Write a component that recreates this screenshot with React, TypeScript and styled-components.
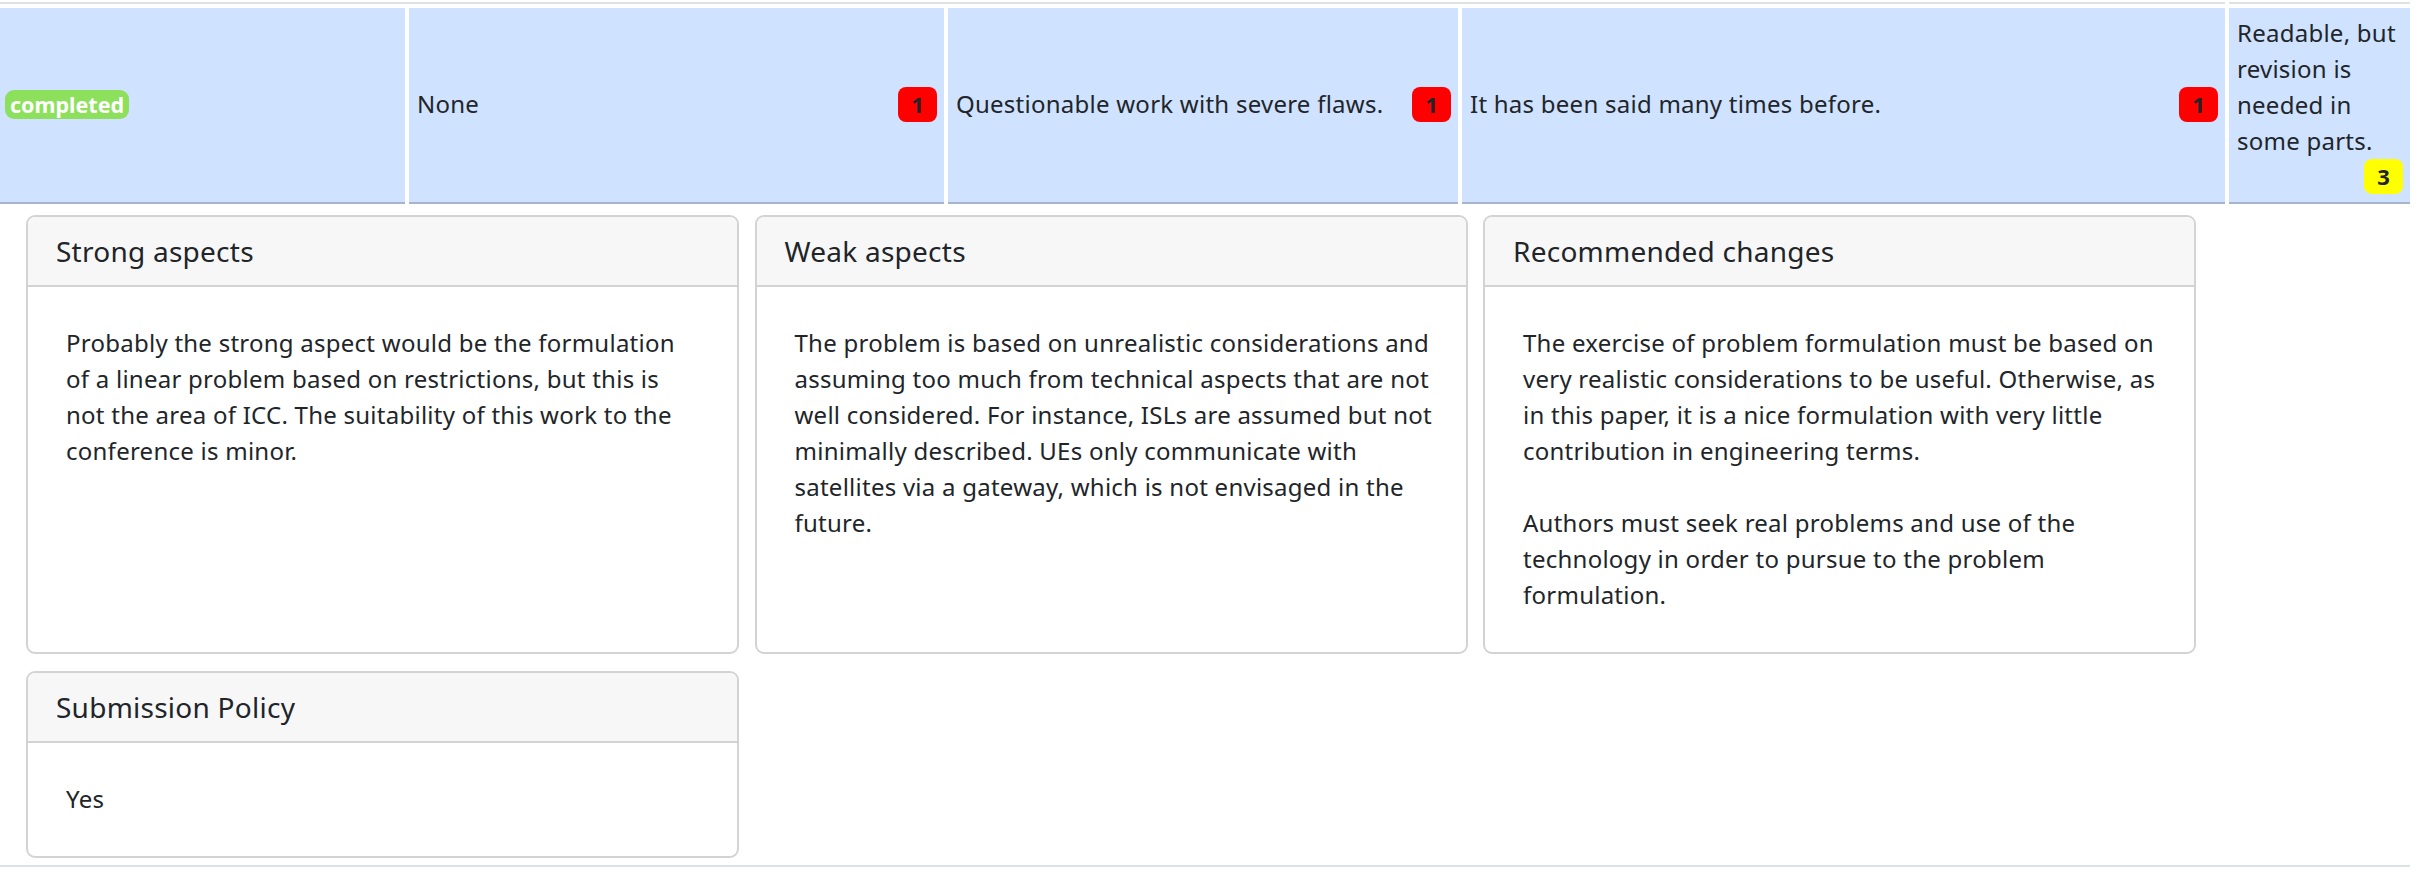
import React from "react";
import styled, { createGlobalStyle } from "styled-components";

const GlobalStyle = createGlobalStyle`
  html, body { margin: 0; padding: 0; background: #ffffff; }
  body {
    font-family: "Noto Sans", "Open Sans", sans-serif;
    font-size: 24px;
    line-height: 36px;
    letter-spacing: 0.25px;
    color: #212529;
  }
  * { box-sizing: border-box; }
`;

const Page = styled.div`
  width: 2410px;
  padding-top: 2px;
`;

const PrevRowEdge = styled.div`
  display: flex;
  gap: 4px;
  height: 2px;
`;

const EdgeSegment = styled.div<{ $w?: number }>`
  height: 2px;
  background: #dee2e6;
  ${(p) => (p.$w ? `width: ${p.$w}px;` : "flex: 1;")}
`;

const SummaryRow = styled.div`
  display: flex;
  gap: 4px;
  margin-top: 4px;
`;

const Cell = styled.div<{ $w: number; $pl?: number }>`
  width: ${(p) => p.$w}px;
  height: 196px;
  flex: none;
  background: #cfe2ff;
  border-bottom: 2px solid #a6b5cc;
  padding: 6px 7px 8px ${(p) => p.$pl ?? 8}px;
  display: flex;
  flex-wrap: wrap;
  align-items: center;
  align-content: center;
  justify-content: space-between;
`;

const CellText = styled.span`
  color: #212529;
`;

const StatusBadge = styled.span`
  display: inline-flex;
  align-items: center;
  height: 29px;
  padding: 0 5px;
  border-radius: 9px;
  background: #8de05b;
  color: #ffffff;
  font-weight: 700;
  font-size: 21.5px;
  letter-spacing: 0;
  line-height: 29px;
`;

const ScoreBadge = styled.span<{ $tone: "red" | "yellow" }>`
  display: inline-flex;
  align-items: center;
  justify-content: center;
  margin-left: auto;
  width: 39px;
  height: 35px;
  border-radius: 8px;
  background: ${(p) => (p.$tone === "red" ? "#ff0000" : "#ffff00")};
  color: #212529;
  font-weight: 700;
  font-size: 22px;
  letter-spacing: 0;
  line-height: 35px;
`;

const DetailRow = styled.div`
  margin-top: 4px;
  padding: 7px 0 7px 26px;
  border-bottom: 2px solid #dee2e6;
`;

const CardGrid = styled.div`
  display: grid;
  grid-template-columns: repeat(3, 713px);
  column-gap: 15.5px;
  row-gap: 17px;
`;

const Card = styled.section`
  border: 2px solid #d3d3d3;
  border-radius: 9px;
  background: #ffffff;
  overflow: hidden;
  display: flex;
  flex-direction: column;
`;

const CardHeader = styled.header`
  background: #f7f7f7;
  border-bottom: 2px solid #d3d3d3;
  padding: 13px 28px;
  font-size: 28px;
  line-height: 42px;
  color: #212529;
`;

const CardBody = styled.div<{ $pr: number }>`
  padding: 38px ${(p) => p.$pr}px 39px 38px;
  flex: 1;
`;

const Para = styled.p`
  margin: 0 0 36px 0;
  &:last-child { margin-bottom: 0; }
`;

type Review = { title: string; paras: string[]; inset: number };

const reviews: Review[] = [
  {
    title: "Strong aspects",
    inset: 35,
    paras: [
      "Probably the strong aspect would be the formulation of a linear problem based on restrictions, but this is not the area of ICC. The suitability of this work to the conference is minor.",
    ],
  },
  {
    title: "Weak aspects",
    inset: 31,
    paras: [
      "The problem is based on unrealistic considerations and assuming too much from technical aspects that are not well considered. For instance, ISLs are assumed but not minimally described. UEs only communicate with satellites via a gateway, which is not envisaged in the future.",
    ],
  },
  {
    title: "Recommended changes",
    inset: 35,
    paras: [
      "The exercise of problem formulation must be based on very realistic considerations to be useful. Otherwise, as in this paper, it is a nice formulation with very little contribution in engineering terms.",
      "Authors must seek real problems and use of the technology in order to pursue to the problem formulation.",
    ],
  },
  {
    title: "Submission Policy",
    inset: 35,
    paras: ["Yes"],
  },
];

const scores = [
  { w: 535, text: "None", score: "1", tone: "red" as const },
  { w: 510, text: "Questionable work with severe flaws.", score: "1", tone: "red" as const },
  { w: 763, text: "It has been said many times before.", score: "1", tone: "red" as const },
  { w: 181, text: "Readable, but revision is needed in some parts.", score: "3", tone: "yellow" as const },
];

export default function App() {
  return (
    <Page>
      <GlobalStyle />
      <PrevRowEdge>
        <EdgeSegment $w={2225} />
        <EdgeSegment />
      </PrevRowEdge>
      <SummaryRow>
        <Cell $w={405} $pl={5}>
          <StatusBadge>completed</StatusBadge>
        </Cell>
        {scores.map((s) => (
          <Cell key={s.text} $w={s.w}>
            <CellText>{s.text}</CellText>
            <ScoreBadge $tone={s.tone}>{s.score}</ScoreBadge>
          </Cell>
        ))}
      </SummaryRow>
      <DetailRow>
        <CardGrid>
          {reviews.map((r) => (
            <Card key={r.title}>
              <CardHeader>{r.title}</CardHeader>
              <CardBody $pr={r.inset}>
                {r.paras.map((p, i) => (
                  <Para key={i}>{p}</Para>
                ))}
              </CardBody>
            </Card>
          ))}
        </CardGrid>
      </DetailRow>
    </Page>
  );
}
